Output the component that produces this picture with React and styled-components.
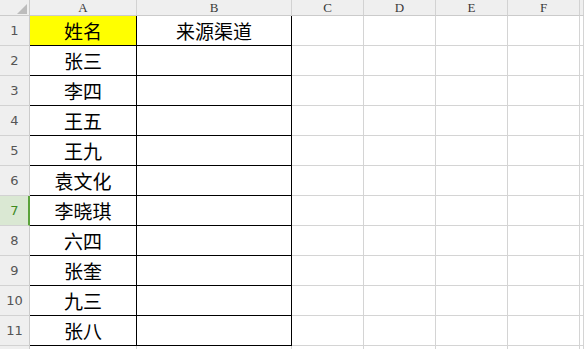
import React from 'react';
import styled, { createGlobalStyle, css } from 'styled-components';

const GlobalStyle = createGlobalStyle`
  html, body {
    margin: 0;
    padding: 0;
    background: #fff;
    overflow: hidden;
  }
`;

const Sheet = styled.div`
  display: grid;
  grid-template-columns: 30px 107px 155px repeat(4, 72px) 1fr;
  grid-template-rows: 16px repeat(12, 30px);
  width: 584px;
  height: 349px;
  overflow: hidden;
  background: #fff;
`;

const Corner = styled.div`
  position: relative;
  background: #efefef;
  border-right: 1px solid #cbcbcb;
  border-bottom: 1px solid #cbcbcb;
  box-sizing: border-box;
`;

const CornerMark = styled.svg`
  position: absolute;
  left: 17px;
  top: 4px;
`;

const ColHead = styled.div`
  display: flex;
  align-items: center;
  justify-content: center;
  background: #efefef;
  border-right: 1px solid #d2d2d2;
  border-bottom: 1px solid #cbcbcb;
  box-sizing: border-box;
  font-family: "Liberation Serif", "DejaVu Serif", serif;
  font-size: 13px;
  color: #3a3a3a;
  line-height: 1;
`;

const RowHead = styled.div`
  display: flex;
  align-items: center;
  justify-content: center;
  background: ${p => (p.$active ? '#dae8d3' : '#efefef')};
  border-right: ${p => (p.$active ? '2px solid #5ba33b' : '1px solid #cbcbcb')};
  border-bottom: 1px solid #d2d2d2;
  box-sizing: border-box;
  font-family: "DejaVu Sans", "Liberation Sans", sans-serif;
  font-size: 13px;
  color: ${p => (p.$active ? '#3f8a1f' : '#555')};
  padding-left: ${p => (p.$active ? '1px' : '0')};
`;

const Cell = styled.div`
  display: flex;
  align-items: center;
  justify-content: center;
  box-sizing: border-box;
  border-right: 1px solid #d4d4d4;
  border-bottom: 1px solid #d4d4d4;
  font-family: "Noto Sans CJK SC", "Noto Sans", sans-serif;
  font-size: 19px;
  line-height: 1;
  color: #000;
  background: ${p => p.$fill || '#fff'};
  ${p =>
    p.$boxed &&
    css`
      border-right-color: #000;
      border-bottom-color: #000;
    `}
`;

const columns = ['A', 'B', 'C', 'D', 'E', 'F', ''];
const names = ['张三', '李四', '王五', '王九', '袁文化', '李晓琪', '六四', '张奎', '九三', '张八'];

const rows = [
  ['姓名', '来源渠道'],
  ...names.map(n => [n, '']),
  ['', ''],
];

export default function App() {
  return (
    <>
      <GlobalStyle />
      <Sheet>
        <Corner>
          <CornerMark width="10" height="10" viewBox="0 0 10 10">
            <polygon points="10,0 10,10 0,10" fill="#bcbcbc" />
          </CornerMark>
        </Corner>
        {columns.map((c, i) => (
          <ColHead key={i}>{c}</ColHead>
        ))}
        {rows.map((r, ri) => {
          const boxed = ri < 11;
          return (
            <React.Fragment key={ri}>
              {/* row 12 is only a sliver at the bottom, its number is out of view */}
              <RowHead $active={ri === 6}>{ri < 11 ? ri + 1 : ''}</RowHead>
              <Cell $boxed={boxed} $fill={ri === 0 ? '#ffff00' : undefined}>{r[0]}</Cell>
              <Cell $boxed={boxed}>{r[1]}</Cell>
              <Cell />
              <Cell />
              <Cell />
              <Cell />
              <Cell />
            </React.Fragment>
          );
        })}
      </Sheet>
    </>
  );
}
